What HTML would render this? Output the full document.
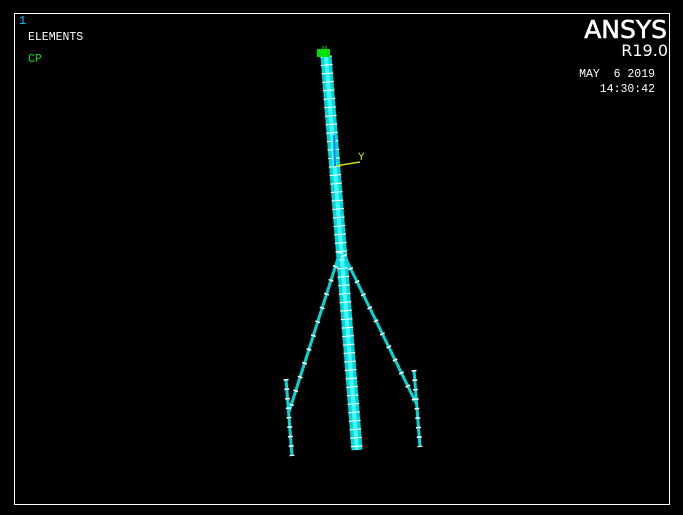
<!DOCTYPE html>
<html><head><style>
html,body{margin:0;padding:0;background:#000;width:683px;height:515px;overflow:hidden}
</style></head><body>
<svg width="683" height="515" xmlns="http://www.w3.org/2000/svg" style="position:absolute;left:0;top:0">
<rect x="14.5" y="13.5" width="655" height="491" fill="none" stroke="#fff" stroke-width="1"/>
<text x="19" y="24" font-family="Liberation Mono,monospace" font-size="12" fill="#00c8ff">1</text>
<text x="28" y="40" font-family="Liberation Mono,monospace" font-size="11.5" fill="#fff">ELEMENTS</text>
<text x="28" y="62" font-family="Liberation Mono,monospace" font-size="11.5" fill="#00e000">CP</text>
<text x="667" y="38" text-anchor="end" font-family="DejaVu Sans,sans-serif" font-size="25" fill="#fff" stroke="#fff" stroke-width="0.6">ANSYS</text>
<text x="668" y="56" text-anchor="end" font-family="DejaVu Sans,sans-serif" font-size="16" fill="#fff">R19.0</text>
<text x="655" y="77" text-anchor="end" font-family="Liberation Mono,monospace" font-size="11.5" fill="#fff">MAY&#160;&#160;6 2019</text>
<text x="655" y="92" text-anchor="end" font-family="Liberation Mono,monospace" font-size="11.5" fill="#fff">14:30:42</text>
<line x1="326" y1="56" x2="357" y2="450" stroke="#00d8d8" stroke-width="11"/>
<line x1="326" y1="56" x2="357" y2="450" stroke="#40ffff" stroke-width="4"/>
<line x1="326" y1="56" x2="357" y2="450" stroke="#fff" stroke-width="12" stroke-dasharray="1 7.5"/>
<g stroke-width="3">
<line x1="340" y1="252" x2="289" y2="412" stroke="#00d8d8"/>
<line x1="340" y1="252" x2="289" y2="412" stroke="#fff" stroke-width="5" stroke-dasharray="1.5 13"/>
<line x1="344" y1="255" x2="417" y2="405" stroke="#00d8d8"/>
<line x1="344" y1="255" x2="417" y2="405" stroke="#fff" stroke-width="5" stroke-dasharray="1.5 13"/>
<line x1="286" y1="379" x2="292" y2="456" stroke="#00d8d8"/>
<line x1="286" y1="379" x2="292" y2="456" stroke="#fff" stroke-width="5" stroke-dasharray="1.5 8"/>
<line x1="414" y1="370" x2="420" y2="447" stroke="#00d8d8"/>
<line x1="414" y1="370" x2="420" y2="447" stroke="#fff" stroke-width="5" stroke-dasharray="1.5 8"/>
</g>
<rect x="317" y="49" width="13" height="8" fill="#00e000"/>
<line x1="323" y1="46" x2="323" y2="50" stroke="#00e000"/>
<line x1="326" y1="46" x2="326" y2="50" stroke="#00e000"/>
<line x1="335" y1="166" x2="360" y2="162" stroke="#c0e000" stroke-width="1.5"/>
<line x1="335" y1="166" x2="334" y2="135" stroke="#0080ff" stroke-width="2"/>
<text x="358" y="160" font-family="Liberation Mono,monospace" font-size="11" fill="#c0e000">Y</text>
</svg>
</body></html>
